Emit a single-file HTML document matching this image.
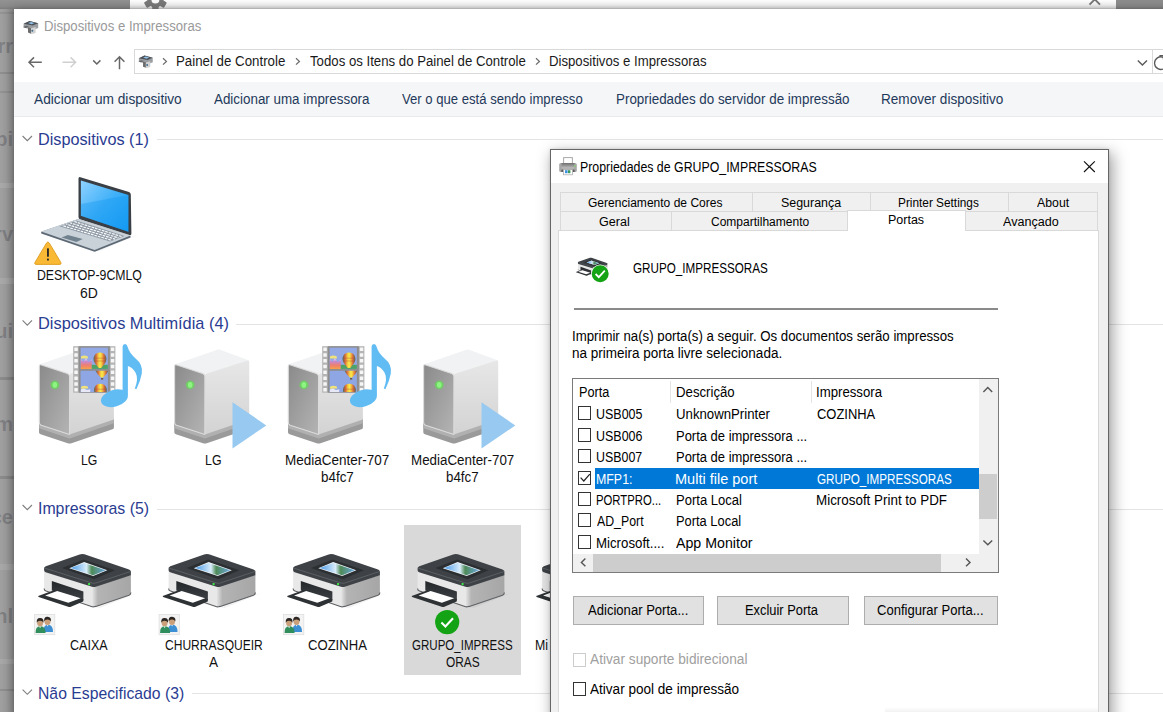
<!DOCTYPE html>
<html lang="pt-BR"><head><meta charset="utf-8"><title>Dispositivos e Impressoras</title>
<style>
html,body{margin:0;padding:0}
body{width:1163px;height:712px;overflow:hidden;position:relative;background:#9b9b9b;font-family:"Liberation Sans",sans-serif}
.t{position:absolute;white-space:pre;transform-origin:0 0;font-family:"Liberation Sans",sans-serif}
.a{position:absolute}
svg{position:absolute;left:0;top:0;overflow:visible}
.bgt{position:absolute;font-weight:bold;font-size:20px;line-height:24px;color:rgba(50,50,62,.30);right:1150px;white-space:pre;text-align:right}
</style></head>
<body>
<!-- background strip (other window behind) -->
<div class="a" style="left:0;top:0;width:14px;height:712px;background:linear-gradient(90deg,#a0a0a0 0,#9a9a9a 6px,#8c8c8c 11px,#7e7e7e 14px)"></div>
<div class="a" style="left:0;top:12px;width:14px;height:1.5px;background:rgba(0,0,0,.07)"></div>
<div class="a" style="left:0;top:71.5px;width:14px;height:2px;background:rgba(0,0,0,.10)"></div>
<div class="a" style="left:0;top:91px;width:14px;height:1.5px;background:rgba(0,0,0,.08)"></div>
<div class="a" style="left:0;top:183px;width:14px;height:5px;background:rgba(255,255,255,.10)"></div>
<div class="a" style="left:0;top:278px;width:14px;height:6px;background:rgba(255,255,255,.10)"></div>
<div class="a" style="left:0;top:377px;width:14px;height:2.5px;background:rgba(0,0,0,.12)"></div>
<div class="a" style="left:0;top:476px;width:14px;height:2.5px;background:rgba(0,0,0,.12)"></div>
<div class="a" style="left:0;top:564px;width:14px;height:6px;background:rgba(255,255,255,.09)"></div>
<div class="a" style="left:0;top:659px;width:14px;height:5px;background:rgba(255,255,255,.09)"></div>
<div class="a" style="left:0;top:689px;width:14px;height:1.5px;background:rgba(0,0,0,.10)"></div>

<span class="bgt" style="top:33.5px">rr</span>
<span class="bgt" style="top:126.5px">bi</span>
<span class="bgt" style="top:222.1px">rv</span>
<span class="bgt" style="top:319.1px">ui</span>
<span class="bgt" style="top:412.1px">m</span>
<span class="bgt" style="top:504.6px">ce</span>
<span class="bgt" style="top:603.9px">nl</span>
<!-- top strip -->
<div class="a" style="left:0;top:0;width:130px;height:9px;background:linear-gradient(180deg,#929292,#8a8a8a 70%,#7c7c7c)"></div>
<div class="a" style="left:129.5px;top:0;width:986px;height:9px;background:linear-gradient(180deg,#fff 0,#f5f5f5 5px,#e2e2e2 7.5px,#bebebe 9px)"></div>
<div class="a" style="left:1115.5px;top:0;width:48px;height:9px;background:linear-gradient(180deg,#8e8e8e,#8a8a8a 70%,#7a7a7a)"></div>
<svg width="1163" height="9" viewBox="0 0 1163 9" style="height:9px;overflow:hidden">
 <g fill="#7a7a7a"><circle cx="155.4" cy="-0.5" r="8.1"/>
 <g transform="translate(155.4,-0.5)"><rect x="-3.2" y="-11.6" width="6.4" height="23.2" rx="1.2"/><rect x="-3.2" y="-11.6" width="6.4" height="23.2" rx="1.2" transform="rotate(60)"/><rect x="-3.2" y="-11.6" width="6.4" height="23.2" rx="1.2" transform="rotate(120)"/></g></g>
 <circle cx="155.4" cy="-0.5" r="4" fill="#fafafa"/>
 <path d="M1089.5 4.6 L1094.8 -0.6 L1100 4.6" stroke="#767676" stroke-width="1.9" fill="none"/>
</svg>
<!-- main window -->
<div class="a" style="left:14px;top:9px;width:1160px;height:710px;background:#fff;box-shadow:0 0 10px rgba(0,0,0,.25)"></div>
<div class="a" style="left:14px;top:82px;width:1149px;height:34px;background:#f5f6f7;border-bottom:1px solid #e9eaeb"></div>
<div class="a" style="left:134px;top:49px;width:1040px;height:22.6px;border:1px solid #d9d9d9;background:#fff"></div>
<div class="a" style="left:1152px;top:49px;width:1px;height:24px;background:#d9d9d9"></div>
<!-- group lines -->
<div class="a" style="left:157px;top:139px;width:1006px;height:1px;background:#e4e4e4"></div>
<div class="a" style="left:236px;top:324px;width:927px;height:1px;background:#e4e4e4"></div>
<div class="a" style="left:157px;top:508.5px;width:1006px;height:1px;background:#e4e4e4"></div>
<div class="a" style="left:192px;top:692.5px;width:971px;height:1px;background:#e4e4e4"></div>
<!-- selected item -->
<div class="a" style="left:404.25px;top:525.25px;width:116.5px;height:149.25px;background:#d9d9d9"></div>
<svg width="1163" height="712" viewBox="0 0 1163 712">
<defs>
 <linearGradient id="gScr" x1="0" y1="0" x2="1" y2="1"><stop offset="0" stop-color="#8fd2ff"/><stop offset=".5" stop-color="#3fb0f8"/><stop offset="1" stop-color="#169cf3"/></linearGradient>
 <linearGradient id="gFront" x1="0" y1="0" x2="1" y2="1"><stop offset="0" stop-color="#8a8a8a"/><stop offset="1" stop-color="#b4b4b4"/></linearGradient>
 <linearGradient id="gSide" x1="0" y1="0" x2="0" y2="1"><stop offset="0" stop-color="#e7e7e7"/><stop offset="1" stop-color="#d3d3d3"/></linearGradient>
 <linearGradient id="gPhoto" x1="0" y1="0" x2="1" y2="0"><stop offset="0" stop-color="#4a9be8"/><stop offset=".45" stop-color="#d8ecfa"/><stop offset=".6" stop-color="#4e8a58"/><stop offset="1" stop-color="#6aa8e0"/></linearGradient>
 <radialGradient id="gLed"><stop offset="0" stop-color="#b8ffb0"/><stop offset=".5" stop-color="#5fe050"/><stop offset="1" stop-color="#5fe050" stop-opacity="0"/></radialGradient>
 <symbol id="devico" viewBox="0 0 16 14" overflow="visible">
  <path d="M0.6 3.2 L6.5 0.3 L15.2 2.6 L15.2 7.4 L9.8 9.4 L0.6 6.8Z" fill="#9a9ea2"/>
  <path d="M0.6 3.2 L6.5 0.3 L15.2 2.6 L9.6 5 Z" fill="#4a5056"/>
  <path d="M5 2.4 L8 1.3 L11.5 2.3 L8.6 3.6Z" fill="#8fc0e8"/>
  <path d="M0 6.3 L3.4 5.2 L6 6 L2.6 7.4Z" fill="#666" />
  <path d="M5 6.6 L8 7.6 L8 13.2 L5 12Z" fill="#6c6c6c"/>
  <path d="M8 7.6 L12.6 6.4 L12.6 12.4 L8 13.6Z" fill="#d2d2d2"/>
  <circle cx="9.3" cy="10.2" r="1" fill="#3d6f8f"/>
 </symbol>
 <symbol id="server" overflow="visible">
  <path d="M39 423 L69.6 433 L113.9 418 L113.9 427.4 Q113.9 428.8 112.5 429.3 L71.5 443.2 Q69.6 443.8 67.7 443.2 L40.6 434.3 Q39 433.8 39 432.2Z" fill="#9a9a9a"/>
  <path d="M39 424 L69.6 434 L113.9 419 L113.9 423.2 L69.6 438.4 L39 428.2Z" fill="#b0b0b0"/>
  <path d="M40 364.2 L83.5 349.3 L113.8 360.6 L70 374.4Z" fill="#f1f2f3"/>
  <path d="M69.6 375.6 Q69.6 374.2 70.8 373.8 L112.2 360.6 Q113.9 360.2 113.9 362 L113.9 419.6 L69.6 434.6Z" fill="url(#gSide)"/>
  <path d="M39.3 366.5 Q39.3 364 41.6 364.9 L67.4 373.6 Q69.6 374.4 69.6 376.6 L69.6 434.6 L41.2 425.2 Q39.3 424.5 39.3 422.6Z" fill="url(#gFront)"/>
  <path d="M69.6 434.6 L41.2 425.2 Q39.3 424.5 39.3 422.6 L39.3 366.5 Q39.3 364 41.6 364.9 L67.4 373.6 Q69.6 374.4 69.6 376.6 L69.6 434.6" fill="none" stroke="#dcdcdc" stroke-width="1.1"/>
  <circle cx="54.9" cy="384.9" r="5.2" fill="url(#gLed)"/>
  <ellipse cx="54.9" cy="384.9" rx="2.3" ry="2.8" fill="#90f284"/>
 </symbol>
 <symbol id="film" overflow="visible">
  <defs>
   <linearGradient id="gBal" x1="0" y1="0" x2="1" y2="0"><stop offset="0" stop-color="#4d6e58"/><stop offset=".2" stop-color="#d86a3e"/><stop offset=".36" stop-color="#f2c040"/><stop offset=".5" stop-color="#f8ee4c"/><stop offset=".64" stop-color="#f2c040"/><stop offset=".8" stop-color="#d86a3e"/><stop offset="1" stop-color="#4d6e58"/></linearGradient>
   <linearGradient id="gMt" x1="0" y1="0" x2="0" y2="1"><stop offset="0" stop-color="#e9e4f6"/><stop offset=".3" stop-color="#c48ad0"/><stop offset=".65" stop-color="#ee7e72"/><stop offset="1" stop-color="#f6a04a"/></linearGradient>
   <clipPath id="cf1"><rect x="80.6" y="347.7" width="27.3" height="21.2"/></clipPath>
   <clipPath id="cf2"><rect x="80.6" y="370.8" width="27.3" height="21.3"/></clipPath>
  </defs>
  <rect x="73.2" y="346.2" width="42.2" height="46.5" fill="#b4b4b4"/>
  <rect x="78.7" y="346.2" width="31.2" height="46.5" fill="#8e8e8e"/>
  <g fill="#f6f6f6"><rect x="74.3" y="347.50" width="3.5" height="3.5" rx=".5"/><rect x="110.8" y="347.50" width="3.5" height="3.5" rx=".5"/><rect x="74.3" y="353.28" width="3.5" height="3.5" rx=".5"/><rect x="110.8" y="353.28" width="3.5" height="3.5" rx=".5"/><rect x="74.3" y="359.06" width="3.5" height="3.5" rx=".5"/><rect x="110.8" y="359.06" width="3.5" height="3.5" rx=".5"/><rect x="74.3" y="364.84" width="3.5" height="3.5" rx=".5"/><rect x="110.8" y="364.84" width="3.5" height="3.5" rx=".5"/><rect x="74.3" y="370.62" width="3.5" height="3.5" rx=".5"/><rect x="110.8" y="370.62" width="3.5" height="3.5" rx=".5"/><rect x="74.3" y="376.40" width="3.5" height="3.5" rx=".5"/><rect x="110.8" y="376.40" width="3.5" height="3.5" rx=".5"/><rect x="74.3" y="382.18" width="3.5" height="3.5" rx=".5"/><rect x="110.8" y="382.18" width="3.5" height="3.5" rx=".5"/><rect x="74.3" y="387.96" width="3.5" height="3.5" rx=".5"/><rect x="110.8" y="387.96" width="3.5" height="3.5" rx=".5"/></g>
  <rect x="80.6" y="347.7" width="27.3" height="21.2" fill="#93a9e6"/>
  <rect x="80.6" y="370.8" width="27.3" height="21.3" fill="#8fa6e4"/>
  <g clip-path="url(#cf1)">
   <path d="M81 356.4 Q84 354.6 87.6 356.2 L88 358.4 L81 358.6Z" fill="#f0e27a"/>
   <path d="M80.6 359 L83.5 361.5 L86 358.2 L88.6 362 L91.8 359.6 L91.8 368.9 L80.6 368.9Z" fill="url(#gMt)"/>
   <rect x="91.8" y="364.8" width="16.1" height="4.1" fill="#4da266"/>
   <path d="M100 352.6 C104.6 352.6 106.6 356.4 106.4 359.4 C106.2 362.8 102.6 365.8 101.2 368 L98.8 368 C97.4 365.8 93.8 362.8 93.6 359.4 C93.4 356.4 95.4 352.6 100 352.6Z" fill="url(#gBal)"/>
   <path d="M93.8 358.2 H106.2 M94 361 H106" stroke="#c04a38" stroke-width=".8" opacity=".55"/>
  </g>
  <g clip-path="url(#cf2)">
   <path d="M102 363 C106.6 363 108.6 366.8 108.4 369.8 C108.2 373.2 104.6 375.6 103.2 377.4 L100.8 377.4 C99.4 375.6 95.8 373.2 95.6 369.8 C95.4 366.8 97.4 363 102 363Z" fill="url(#gBal)"/>
   <rect x="101" y="378" width="2.2" height="1.6" fill="#6a5a50"/>
   <path d="M81 386.8 Q84 385 87.8 386.6 L88.2 388.4 L81 388.8Z" fill="#f0e27a"/>
   <path d="M80.6 389.4 L84 388.4 L87 390 L90.2 389.2 L90.2 392.1 L80.6 392.1Z" fill="#e6e8f6"/>
   <path d="M100.4 383.8 C105 383.8 107 387.6 106.8 390.6 L106.6 392.1 L94.2 392.1 L94 390.6 C93.8 387.6 95.8 383.8 100.4 383.8Z" fill="url(#gBal)"/>
   <path d="M94.2 389.2 H106.6" stroke="#c04a38" stroke-width=".8" opacity=".55"/>
  </g>
 </symbol>
 <symbol id="note" overflow="visible">
  <ellipse cx="114.4" cy="398.2" rx="13.8" ry="8.4" transform="rotate(-16 114.4 398.2)" fill="#62bcf4"/>
  <path d="M122.6 346.6 Q122.8 344.1 125 344.1 Q127 344.2 127.5 346.6 Q129.4 353.4 135.6 358.4 Q143.4 364.6 141.8 373.6 Q140.4 381.6 136.4 389.2 L134.8 388.4 Q138.8 378.8 135.6 372.8 Q132.8 367.8 127.9 366 L127.9 395 L122.6 399Z" fill="#62bcf4"/>
 </symbol>
 <symbol id="printer" overflow="visible">
  <defs>
   <linearGradient id="gPs" x1="0" y1="0" x2="1" y2="0"><stop offset="0" stop-color="#ebebeb"/><stop offset=".16" stop-color="#b4b4b4"/><stop offset="1" stop-color="#a6a6a6"/></linearGradient>
   <linearGradient id="gSlot" x1="0" y1="0" x2="0" y2="1"><stop offset="0" stop-color="#24272a"/><stop offset="1" stop-color="#3d4145"/></linearGradient>
  </defs>
  <path d="M94 607 L131 595 L140 592 L100 608Z" fill="#000" opacity=".05"/>
  <path d="M91.5 586.4 L130.9 575 L130.9 592.6 Q130.9 594.6 129 595.3 L95.8 606.4 L91.5 606.8Z" fill="url(#gPs)"/>
  <path d="M44.1 571.5 L92.4 586.6 L92.4 606.9 Q91.8 606.8 91.4 606.6 L46 591 Q44.1 590.3 44.1 588.4Z" fill="#e8e8e8"/>
  <path d="M44.1 588.4 Q44.1 590.3 46 591 L91.4 606.6 Q92.6 607 93.9 606.8 L95.8 606.4 L129 595.3 Q130.9 594.6 130.9 592.6" fill="none" stroke="#5e6063" stroke-width="1.1"/>
  <path d="M51.8 581.1 L83.4 591.4 L83.4 600.6 L51.8 590.6Z" fill="url(#gSlot)"/>
  <path d="M38.2 595.9 L53.9 590.2 L83.4 599.3 L83.2 601.6 L70.3 606.9 Q69.6 607.1 68.9 606.9 L38.6 596.9Z" fill="#2e3235"/>
  <path d="M45.1 595.4 L57.2 590.9 L80.7 598.3 L68.3 602.8Z" fill="#fff"/>
  <path d="M44.1 568.6 Q44.1 566.9 45.8 566.2 L79.6 554.4 Q82 553.5 84.4 554.3 L129 569.4 Q130.9 570.1 130.9 572 L130.9 575.2 L95.8 586.8 Q93.9 587.4 92 586.8 L45.6 572.3 Q44.1 571.7 44.1 570.2Z" fill="#3e4246"/>
  <path d="M44.3 568 L92 583 Q93.9 583.6 95.8 583 L130.8 571.4" fill="none" stroke="#5a5f64" stroke-width="1"/>
  <path d="M62 568 L83.6 559.5 L115 570.2 L94 579.2Z" fill="#2c2f32"/>
  <path d="M69.3 568.2 L84.1 562.1 L107.3 570.3 L93.2 575.9Z" fill="#eef4fa"/>
  <path d="M70.8 568.1 L84.1 563 L105.6 570.3 L93.1 575.2Z" fill="url(#gPhoto)"/>
  <rect x="88.1" y="583" width="2" height="2.2" fill="#3ee048"/>
 </symbol>
 <symbol id="shared" overflow="visible">
  <rect x="34.6" y="614.4" width="20.2" height="20.3" fill="#f3f3f3" stroke="#dfdfdf" stroke-width=".8"/>
  <path d="M43.4 632 Q43 625.4 48 624.6 Q53.2 625.4 53 632Z" fill="#3d8fd4"/>
  <path d="M46.6 624.8 L47.6 626.6 L48.6 624.8Z" fill="#e8f0f8"/>
  <ellipse cx="47.5" cy="621.4" rx="3" ry="3.5" fill="#caa07a"/>
  <path d="M44.2 621.6 Q43.6 616.6 47.6 616.8 Q51.6 617 50.8 621.6 Q49.8 619.4 47.2 619.6 Q45 619.8 44.2 621.6Z" fill="#2b2622"/>
  <path d="M35.6 632.9 Q35.2 626.8 40.4 626 Q45.8 626.8 45.6 632.9Z" fill="#2f8e5c"/>
  <path d="M39 626.2 L40.1 628.2 L41.2 626.2Z" fill="#e8f4ec"/>
  <ellipse cx="40.1" cy="622.7" rx="3" ry="3.5" fill="#caa07a"/>
  <path d="M36.8 622.8 Q36.2 617.8 40.2 618 Q44.2 618.2 43.4 622.8 Q42.4 620.6 39.8 620.8 Q37.6 621 36.8 622.8Z" fill="#2b2622"/>
 </symbol>
</defs>
<!-- title icon -->
<use href="#devico" x="23" y="20.6" width="16" height="14"/>
<use href="#devico" x="138.3" y="55.2" width="15.2" height="13.4"/>
<!-- nav arrows -->
<g fill="none" stroke="#676767" stroke-width="1.5">
 <path d="M41.8 62.3 H29 M34 57.4 L29 62.3 L34 67.2"/>
 <path d="M119.5 69.3 V56.8 M114.6 61.8 L119.5 56.8 L124.4 61.8"/>
</g>
<path d="M62.5 62.3 H75.6 M70.6 57.4 L75.6 62.3 L70.6 67.2" fill="none" stroke="#d0d0d0" stroke-width="1.5"/>
<path d="M93.2 60.4 L96.8 64 L100.4 60.4" fill="none" stroke="#676767" stroke-width="1.5"/>
<g fill="none" stroke="#6b6b6b" stroke-width="1.25">
 <path d="M163 58.2 L166.4 61.4 L163 64.6"/>
 <path d="M296 58.2 L299.4 61.4 L296 64.6"/>
 <path d="M536 58.2 L539.4 61.4 L536 64.6"/>
</g>
<path d="M1137.8 60.4 L1142.4 65 L1147 60.4" fill="none" stroke="#5a5a5a" stroke-width="1.4"/>
<path d="M1163.5 57.4 A6.3 6.3 0 1 0 1164 68.6" fill="none" stroke="#5a5a5a" stroke-width="1.3"/><path d="M1159.4 55.6 L1163.4 55.6 L1163.4 59.6" fill="none" stroke="#5a5a5a" stroke-width="1.2"/>
<!-- group chevrons -->
<g fill="none" stroke="#7d7d7d" stroke-width="1.1">
 <path d="M22.6 136 L27.3 140.7 L32 136"/>
 <path d="M22.6 320.4 L27.3 325.1 L32 320.4"/>
 <path d="M22.6 505 L27.3 509.7 L32 505"/>
 <path d="M22.6 689.6 L27.3 694.3 L32 689.6"/>
</g>
<!-- laptop -->
<g>
 <path d="M95 251 L131 236.5 L139 234.5 L100 251Z" fill="#000" opacity=".04"/>
 <path d="M41.2 231.8 L77.8 219.2 L130.5 236 L130.5 237.6 L95.4 251.6 Q94.6 251.9 93.8 251.6 L41.2 233.4Z" fill="#5d6a76"/>
 <path d="M41.2 231.6 L77.8 219 L130.5 235.6 L94.6 250Z" fill="#c9d1d9"/>
 <path d="M59.4 226.2 L76.4 220.5 L124.6 236 L110.1 241.6Z" fill="#8f9aa5"/>
 <g stroke="#fbfcfd" stroke-width="1.15" stroke-dasharray="2.7 0.9" fill="none"><path d="M74.38 221.56 L121.74 236.62" stroke-dashoffset="0.0"/><path d="M70.33 222.89 L118.41 237.88" stroke-dashoffset="0.8"/><path d="M66.28 224.21 L115.09 239.12" stroke-dashoffset="1.6"/><path d="M62.23 225.54 L111.76 240.38" stroke-dashoffset="2.4000000000000004"/></g>
 <path d="M61.6 237.4 L67.9 234.9 L82.7 239.1 L76.4 241.9Z" fill="#71828f"/>
 <path d="M78.5 178.6 Q78.5 176.6 80.4 177.2 L129 191.9 Q130.7 192.5 130.8 194.4 L131.4 233.6 Q131.4 235.6 129.5 235 L80 219.2 Q78.5 218.7 78.5 217Z" fill="#3a3f45"/>
 <path d="M80.9 180.5 L128.4 195 L128.4 231.8 L80.9 215.7Z" fill="url(#gScr)"/>
 <path d="M80.9 215.7 L80.9 204 L128.4 195 L128.4 231.8Z" fill="#0d96f2" opacity=".35"/>
</g>
<!-- warning -->
<g>
 <path d="M46.4 243.2 Q47.9 240.6 49.4 243.2 L60.8 262.4 Q61.8 264.4 59.6 264.4 L36.2 264.4 Q34 264.4 35 262.4Z" fill="#f9b934" stroke="#dc9b1e" stroke-width=".9"/>
 <rect x="47" y="248.2" width="1.9" height="8.6" rx=".6" fill="#2d2a26"/>
 <rect x="47" y="258.4" width="1.9" height="2.1" rx=".5" fill="#2d2a26"/>
</g>
<!-- media servers -->
<use href="#server"/><use href="#film"/><use href="#note"/>
<use href="#server" x="135.3"/>
<path d="M232.5 402.2 L266.3 425.4 L232.5 448.5Z" fill="#98c9f0"/>
<use href="#server" x="249"/><use href="#film" x="249"/><use href="#note" x="249"/>
<use href="#server" x="384.3"/>
<path d="M481.5 402.2 L515.3 425.4 L481.5 448.5Z" fill="#98c9f0"/>
<!-- printers -->
<use href="#printer"/><use href="#shared"/>
<use href="#printer" x="124.5"/><use href="#shared" x="124.5"/>
<use href="#printer" x="249"/><use href="#shared" x="249"/>
<use href="#printer" x="373.5"/>
<use href="#printer" x="498"/>
<circle cx="447.2" cy="622.1" r="12.1" fill="#14a314"/>
<path d="M441.4 622.4 L445.4 626.4 L453 618.2" fill="none" stroke="#fff" stroke-width="2.1"/>
</svg>

<span class="t" style="left:44.12px;top:16.82px;font-size:14.0px;line-height:18px;transform:scaleX(0.9407);color:#9a9a9a">Dispositivos e Impressoras</span>
<span class="t" style="left:176.12px;top:51.82px;font-size:14.0px;line-height:18px;transform:scaleX(0.9489);color:#1a1a1a">Painel de Controle</span>
<span class="t" style="left:309.59px;top:51.82px;font-size:14.0px;line-height:18px;transform:scaleX(0.9433);color:#1a1a1a">Todos os Itens do Painel de Controle</span>
<span class="t" style="left:549.43px;top:51.82px;font-size:14.0px;line-height:18px;transform:scaleX(0.9417);color:#1a1a1a">Dispositivos e Impressoras</span>
<span class="t" style="left:34.35px;top:89.74px;font-size:14.0px;line-height:18px;transform:scaleX(0.9785);color:#1e395b">Adicionar um dispositivo</span>
<span class="t" style="left:214.35px;top:89.74px;font-size:14.0px;line-height:18px;transform:scaleX(0.9562);color:#1e395b">Adicionar uma impressora</span>
<span class="t" style="left:401.98px;top:89.74px;font-size:14.0px;line-height:18px;transform:scaleX(0.9362);color:#1e395b">Ver o que está sendo impresso</span>
<span class="t" style="left:615.69px;top:89.74px;font-size:14.0px;line-height:18px;transform:scaleX(0.9558);color:#1e395b">Propriedades do servidor de impressão</span>
<span class="t" style="left:880.88px;top:89.74px;font-size:14.0px;line-height:18px;transform:scaleX(0.9701);color:#1e395b">Remover dispositivo</span>
<span class="t" style="left:38.21px;top:128.77px;font-size:17.0px;line-height:22px;transform:scaleX(0.9549);color:#2a3c92">Dispositivos (1)</span>
<span class="t" style="left:38.34px;top:312.69px;font-size:17.0px;line-height:22px;transform:scaleX(0.9628);color:#2a3c92">Dispositivos Multimídia (4)</span>
<span class="t" style="left:38.07px;top:497.77px;font-size:17.0px;line-height:22px;transform:scaleX(0.9333);color:#2a3c92">Impressoras (5)</span>
<span class="t" style="left:38.28px;top:682.61px;font-size:17.0px;line-height:22px;transform:scaleX(0.9262);color:#2a3c92">Não Especificado (3)</span>
<span class="t" style="left:37.12px;top:265.82px;font-size:14.0px;line-height:18px;transform:scaleX(0.8774);color:#111">DESKTOP-9CMLQ</span>
<span class="t" style="left:80.00px;top:283.65px;font-size:14.0px;line-height:18px;transform:scaleX(0.9964);color:#111">6D</span>
<span class="t" style="left:80.62px;top:450.57px;font-size:14.0px;line-height:18px;transform:scaleX(0.8772);color:#111">LG</span>
<span class="t" style="left:204.87px;top:450.57px;font-size:14.0px;line-height:18px;transform:scaleX(0.8845);color:#111">LG</span>
<span class="t" style="left:285.12px;top:450.57px;font-size:14.0px;line-height:18px;transform:scaleX(0.9637);color:#111">MediaCenter-707</span>
<span class="t" style="left:321.00px;top:467.74px;font-size:14.0px;line-height:18px;transform:scaleX(0.9583);color:#111">b4fc7</span>
<span class="t" style="left:410.69px;top:450.57px;font-size:14.0px;line-height:18px;transform:scaleX(0.9549);color:#111">MediaCenter-707</span>
<span class="t" style="left:445.85px;top:467.74px;font-size:14.0px;line-height:18px;transform:scaleX(0.9521);color:#111">b4fc7</span>
<span class="t" style="left:70.11px;top:635.65px;font-size:14.0px;line-height:18px;transform:scaleX(0.8949);color:#111">CAIXA</span>
<span class="t" style="left:164.87px;top:635.65px;font-size:14.0px;line-height:18px;transform:scaleX(0.8613);color:#111">CHURRASQUEIR</span>
<span class="t" style="left:209.45px;top:652.74px;font-size:14.0px;line-height:18px;transform:scaleX(0.9693);color:#111">A</span>
<span class="t" style="left:308.20px;top:635.65px;font-size:14.0px;line-height:18px;transform:scaleX(0.9347);color:#111">COZINHA</span>
<span class="t" style="left:411.96px;top:635.65px;font-size:14.0px;line-height:18px;transform:scaleX(0.8239);color:#111">GRUPO_IMPRESS</span>
<span class="t" style="left:446.21px;top:652.74px;font-size:14.0px;line-height:18px;transform:scaleX(0.8484);color:#111">ORAS</span>
<span class="t" style="left:535.35px;top:635.65px;font-size:14.0px;line-height:18px;transform:scaleX(0.8800);color:#111">Mi</span>
<!-- dialog -->
<div class="a" style="left:550px;top:149px;width:556.5px;height:580px;background:#f0f0f0;border:1px solid #666;box-shadow:3px 5px 14px 1px rgba(0,0,0,.36),0 0 3px rgba(0,0,0,.12)"></div>
<div class="a" style="left:551px;top:150px;width:556.5px;height:33px;background:#fff"></div>
<div class="a" style="left:558px;top:230px;width:540.75px;height:500.00px;background:#fff;border:1px solid #d9d9d9;box-sizing:border-box"></div>
<div class="a" style="left:560px;top:192.2px;width:193.20px;height:19.80px;background:#f0f0f0;border:1px solid #d9d9d9;box-sizing:border-box"></div>
<div class="a" style="left:752.2px;top:192.2px;width:119.00px;height:19.80px;background:#f0f0f0;border:1px solid #d9d9d9;box-sizing:border-box"></div>
<div class="a" style="left:870.2px;top:192.2px;width:138.80px;height:19.80px;background:#f0f0f0;border:1px solid #d9d9d9;box-sizing:border-box"></div>
<div class="a" style="left:1008px;top:192.2px;width:90.20px;height:19.80px;background:#f0f0f0;border:1px solid #d9d9d9;box-sizing:border-box"></div>
<div class="a" style="left:560px;top:211.25px;width:112.00px;height:18.95px;background:#f0f0f0;border:1px solid #d9d9d9;border-bottom:none;box-sizing:border-box"></div>
<div class="a" style="left:671px;top:211.25px;width:177.50px;height:18.95px;background:#f0f0f0;border:1px solid #d9d9d9;border-bottom:none;box-sizing:border-box"></div>
<div class="a" style="left:965.2px;top:211.25px;width:133.00px;height:18.95px;background:#f0f0f0;border:1px solid #d9d9d9;border-bottom:none;box-sizing:border-box"></div>
<div class="a" style="left:847.2px;top:209.6px;width:118.80px;height:21.90px;background:#fff;border:1px solid #d9d9d9;border-bottom:none;box-sizing:border-box"></div>
<div class="a" style="left:574.25px;top:308.4px;width:423.75px;height:1.30px;background:#8a8a8a"></div>
<div class="a" style="left:572px;top:378px;width:427.00px;height:195.00px;background:#fff;border:1px solid #7a7a7a;box-sizing:border-box"></div>
<div class="a" style="left:670.2px;top:380.5px;width:1.00px;height:22.00px;background:#e5e5e5"></div>
<div class="a" style="left:811px;top:380.5px;width:1.00px;height:22.00px;background:#e5e5e5"></div>
<div class="a" style="left:595px;top:467.5px;width:383.50px;height:21.75px;background:#0078d7"></div>
<div class="a" style="left:979.25px;top:379px;width:18.75px;height:174.50px;background:#f0f0f0"></div>
<div class="a" style="left:979.25px;top:474.25px;width:17.50px;height:44.25px;background:#cdcdcd"></div>
<div class="a" style="left:573px;top:553.5px;width:425.00px;height:18.50px;background:#f0f0f0"></div>
<div class="a" style="left:593px;top:554px;width:347.75px;height:17.50px;background:#cdcdcd"></div>
<div class="a" style="left:577.5px;top:406.15px;width:13.80px;height:13.80px;background:#fff;border:1px solid #333;box-sizing:border-box"></div>
<div class="a" style="left:577.5px;top:427.9px;width:13.80px;height:13.80px;background:#fff;border:1px solid #333;box-sizing:border-box"></div>
<div class="a" style="left:577.5px;top:449.15px;width:13.80px;height:13.80px;background:#fff;border:1px solid #333;box-sizing:border-box"></div>
<div class="a" style="left:577.5px;top:470.9px;width:13.80px;height:13.80px;background:#fff;border:1px solid #333;box-sizing:border-box"></div>
<div class="a" style="left:577.5px;top:492.15px;width:13.80px;height:13.80px;background:#fff;border:1px solid #333;box-sizing:border-box"></div>
<div class="a" style="left:577.5px;top:513.4px;width:13.80px;height:13.80px;background:#fff;border:1px solid #333;box-sizing:border-box"></div>
<div class="a" style="left:577.5px;top:535.15px;width:13.80px;height:13.80px;background:#fff;border:1px solid #333;box-sizing:border-box"></div>
<div class="a" style="left:573.25px;top:596px;width:130.50px;height:28.75px;background:#e1e1e1;border:1px solid #adadad;box-sizing:border-box"></div>
<div class="a" style="left:716.75px;top:596px;width:132.00px;height:28.75px;background:#e1e1e1;border:1px solid #adadad;box-sizing:border-box"></div>
<div class="a" style="left:863.75px;top:596px;width:134.25px;height:28.75px;background:#e1e1e1;border:1px solid #adadad;box-sizing:border-box"></div>
<div class="a" style="left:572.6px;top:652.75px;width:13.80px;height:13.75px;background:#fff;border:1px solid #cccccc;box-sizing:border-box"></div>
<div class="a" style="left:572.6px;top:682px;width:13.80px;height:13.70px;background:#fff;border:1px solid #333;box-sizing:border-box"></div>
<div class="a" style="left:885px;top:706.5px;width:213.00px;height:5.50px;background:linear-gradient(180deg,rgba(0,0,0,0),rgba(0,0,0,.05))"></div>
<svg width="1163" height="712" viewBox="0 0 1163 712">
<defs><linearGradient id="gPb" x1="0" y1="0" x2="0" y2="1"><stop offset="0" stop-color="#6f6f6f"/><stop offset=".55" stop-color="#9a9a9a"/><stop offset="1" stop-color="#c4c4c4"/></linearGradient></defs>
<!-- title printer icon -->
<rect x="563.6" y="157.6" width="8.8" height="7" fill="#fff" stroke="#a8a8a8" stroke-width="1"/>
<rect x="559.2" y="163" width="17.6" height="9" rx="1.6" fill="#a6a6a6"/>
<rect x="561.6" y="163" width="12.8" height="5.4" fill="url(#gPb)"/>
<rect x="574.2" y="165.2" width="1.4" height="1.6" fill="#7fd46a"/>
<path d="M561.4 169.6 H574.6 V172 H561.4Z" fill="#5d5d5d"/>
<rect x="563.4" y="169.6" width="9" height="5.2" fill="#fff" stroke="#b0b0b0" stroke-width=".8"/>
<rect x="565" y="170.2" width="2.6" height="3" fill="#3a8fe0"/><rect x="568" y="170.2" width="2.4" height="3" fill="#3c9a5a"/>
<!-- close -->
<path d="M1084 161.4 L1094.8 172 M1094.8 161.4 L1084 172" stroke="#111" stroke-width="1.15" fill="none"/>
<!-- small printer + check -->
<use href="#printer" transform="translate(562.9,69.3) scale(0.34)"/>
<circle cx="600.2" cy="273.8" r="9.2" fill="#fff"/>
<circle cx="600.2" cy="273.8" r="8.5" fill="#14a314"/>
<path d="M595.6 274 L598.8 277.2 L604.8 270.6" fill="none" stroke="#fff" stroke-width="1.8"/>
<!-- scroll arrows -->
<g fill="none" stroke="#555" stroke-width="1.4">
<path d="M983.4 392 L987.8 387.6 L992.2 392"/>
<path d="M983.4 540.4 L987.8 544.8 L992.2 540.4"/>
<path d="M585.4 558.6 L581.4 562.4 L585.4 566.2"/>
<path d="M966 558.6 L970 562.4 L966 566.2"/>
</g>
<!-- check mark -->
<path d="M580.6 477.6 L583.8 481 L589.8 474.2" fill="none" stroke="#222" stroke-width="1.2"/>
</svg>
<span class="t" style="left:579.86px;top:157.82px;font-size:14.0px;line-height:18px;transform:scaleX(0.8819);color:#000">Propriedades de GRUPO_IMPRESSORAS</span>
<span class="t" style="left:588.41px;top:194.67px;font-size:12.5px;line-height:16px;transform:scaleX(0.9631);color:#000">Gerenciamento de Cores</span>
<span class="t" style="left:780.70px;top:194.67px;font-size:12.5px;line-height:16px;transform:scaleX(0.9940);color:#000">Segurança</span>
<span class="t" style="left:898.18px;top:194.67px;font-size:12.5px;line-height:16px;transform:scaleX(0.9462);color:#000">Printer Settings</span>
<span class="t" style="left:1037.15px;top:194.67px;font-size:12.5px;line-height:16px;transform:scaleX(0.9838);color:#000">About</span>
<span class="t" style="left:598.67px;top:213.75px;font-size:12.5px;line-height:16px;transform:scaleX(1.0059);color:#000">Geral</span>
<span class="t" style="left:710.76px;top:213.75px;font-size:12.5px;line-height:16px;transform:scaleX(0.9614);color:#000">Compartilhamento</span>
<span class="t" style="left:887.87px;top:211.75px;font-size:12.5px;line-height:16px;transform:scaleX(0.9991);color:#000">Portas</span>
<span class="t" style="left:1003.40px;top:213.75px;font-size:12.5px;line-height:16px;transform:scaleX(1.0060);color:#000">Avançado</span>
<span class="t" style="left:632.63px;top:258.65px;font-size:14.0px;line-height:18px;transform:scaleX(0.8332);color:#000">GRUPO_IMPRESSORAS</span>
<span class="t" style="left:571.68px;top:326.65px;font-size:14.0px;line-height:18px;transform:scaleX(0.9453);color:#000">Imprimir na(s) porta(s) a seguir. Os documentos serão impressos</span>
<span class="t" style="left:572.47px;top:343.82px;font-size:14.0px;line-height:18px;transform:scaleX(0.9645);color:#000">na primeira porta livre selecionada.</span>
<span class="t" style="left:578.93px;top:382.57px;font-size:14.0px;line-height:18px;transform:scaleX(0.9075);color:#000">Porta</span>
<span class="t" style="left:675.63px;top:382.57px;font-size:14.0px;line-height:18px;transform:scaleX(0.9432);color:#000">Descrição</span>
<span class="t" style="left:816.13px;top:382.57px;font-size:14.0px;line-height:18px;transform:scaleX(0.9422);color:#000">Impressora</span>
<span class="t" style="left:596.12px;top:404.57px;font-size:14.0px;line-height:18px;transform:scaleX(0.8904);color:#000">USB005</span>
<span class="t" style="left:675.62px;top:404.57px;font-size:14.0px;line-height:18px;transform:scaleX(0.9431);color:#000">UnknownPrinter</span>
<span class="t" style="left:817.08px;top:404.57px;font-size:14.0px;line-height:18px;transform:scaleX(0.9239);color:#000">COZINHA</span>
<span class="t" style="left:596.12px;top:426.65px;font-size:14.0px;line-height:18px;transform:scaleX(0.8906);color:#000">USB006</span>
<span class="t" style="left:675.62px;top:426.65px;font-size:14.0px;line-height:18px;transform:scaleX(0.9265);color:#000">Porta de impressora ...</span>
<span class="t" style="left:596.12px;top:447.57px;font-size:14.0px;line-height:18px;transform:scaleX(0.8866);color:#000">USB007</span>
<span class="t" style="left:675.62px;top:447.57px;font-size:14.0px;line-height:18px;transform:scaleX(0.9265);color:#000">Porta de impressora ...</span>
<span class="t" style="left:595.96px;top:469.65px;font-size:14.0px;line-height:18px;transform:scaleX(0.8842);color:#fff">MFP1:</span>
<span class="t" style="left:675.47px;top:469.65px;font-size:14.0px;line-height:18px;transform:scaleX(1.0363);color:#fff">Multi file port</span>
<span class="t" style="left:817.32px;top:469.65px;font-size:14.0px;line-height:18px;transform:scaleX(0.8331);color:#fff">GRUPO_IMPRESSORAS</span>
<span class="t" style="left:595.91px;top:490.57px;font-size:14.0px;line-height:18px;transform:scaleX(0.8084);color:#000">PORTPRO...</span>
<span class="t" style="left:675.83px;top:490.57px;font-size:14.0px;line-height:18px;transform:scaleX(0.9310);color:#000">Porta Local</span>
<span class="t" style="left:816.12px;top:490.57px;font-size:14.0px;line-height:18px;transform:scaleX(0.9570);color:#000">Microsoft Print to PDF</span>
<span class="t" style="left:596.71px;top:511.82px;font-size:14.0px;line-height:18px;transform:scaleX(0.8803);color:#000">AD_Port</span>
<span class="t" style="left:676.05px;top:511.82px;font-size:14.0px;line-height:18px;transform:scaleX(0.9200);color:#000">Porta Local</span>
<span class="t" style="left:595.92px;top:533.57px;font-size:14.0px;line-height:18px;transform:scaleX(0.9467);color:#000">Microsoft....</span>
<span class="t" style="left:676.34px;top:533.57px;font-size:14.0px;line-height:18px;transform:scaleX(1.0139);color:#000">App Monitor</span>
<span class="t" style="left:588.44px;top:600.57px;font-size:14.0px;line-height:18px;transform:scaleX(0.9338);color:#000">Adicionar Porta...</span>
<span class="t" style="left:744.75px;top:600.57px;font-size:14.0px;line-height:18px;transform:scaleX(0.9190);color:#000">Excluir Porta</span>
<span class="t" style="left:876.89px;top:600.57px;font-size:14.0px;line-height:18px;transform:scaleX(0.9316);color:#000">Configurar Porta...</span>
<span class="t" style="left:590.48px;top:649.74px;font-size:14.0px;line-height:18px;transform:scaleX(0.9777);color:#a0a0a0">Ativar suporte bidirecional</span>
<span class="t" style="left:590.48px;top:679.74px;font-size:14.0px;line-height:18px;transform:scaleX(0.9680);color:#000">Ativar pool de impressão</span>
</body></html>
